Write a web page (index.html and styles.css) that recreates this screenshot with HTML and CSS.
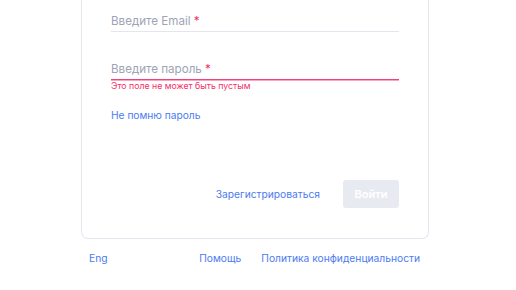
FILE: index.html
```html
<!DOCTYPE html>
<html lang="ru">
<head>
    <meta charset="UTF-8">
    <meta name="viewport" content="width=device-width, initial-scale=1.0">
    <title>Вход</title>
    <link rel="stylesheet" href="styles.css">
</head>
<body><div class="page">
    <form class="card" onsubmit="return false">
        <label class="field">
            <span class="label-text">Введите Email <span class="req">*</span></span>
            <input type="email" name="email">
        </label>
        <label class="field field-error">
            <span class="label-text">Введите пароль <span class="req">*</span></span>
            <input type="password" name="password">
        </label>
        <div class="error-line"></div>
        <p class="error-text">Это поле не может быть пустым</p>

        <a href="#" class="forgot">Не помню пароль</a>

        <div class="actions">
            <a href="#" class="register">Зарегистрироваться</a>
            <button type="submit" class="login-btn" disabled>Войти</button>
        </div>
    </form>

    <div class="footer">
        <a href="#" class="lang">Eng</a>
        <div class="footer-links">
            <a href="#">Помощь</a>
            <a href="#">Политика конфиденциальности</a>
        </div>
    </div>
</div>
</body>
</html>
```

FILE: styles.css
```css
* {
    margin: 0;
    padding: 0;
    box-sizing: border-box;
    font-family: Inter, "Noto Sans", sans-serif;
}
body {
    background: #ffffff;
}
.page {
    width: 348px;
    margin-left: 81px;
}
.card {
    display: flex;
    flex-direction: column;
    border: 1px solid #e3e6ee;
    border-top: none;
    border-radius: 0 0 7px 7px;
    padding: 0 29px 30px;
}
.field {
    display: block;
    position: relative;
    padding: 14px 0 2px;
    border-bottom: 1px solid #e3e6ee;
}
.field + .field {
    margin-top: 16px;
}
.label-text {
    display: block;
    font-size: 11.6px;
    line-height: 15px;
    color: #9ea3b5;
}
.field input {
    display: none;
}
.req {
    color: #f2306a;
}
.field-error {
    border-bottom: none;
}
.error-line {
    height: 1px;
    background: #f4407a;
    box-shadow: 0 1px 0 #f9a6c0;
}
.error-text {
    font-size: 8.75px;
    line-height: 12px;
    color: #f2306a;
}
.forgot {
    align-self: flex-start;
    margin-top: 16px;
    font-size: 10.2px;
    line-height: 14px;
    color: #4b7bf0;
    text-decoration: none;
}
.actions {
    display: flex;
    justify-content: flex-end;
    align-items: center;
    gap: 23px;
    margin-top: 58px;
}
.register {
    font-size: 10.25px;
    color: #4b7bf0;
    text-decoration: none;
}
.login-btn {
    width: 56px;
    height: 28px;
    border: none;
    border-radius: 3px;
    background: #e8eaf2;
    color: #ffffff;
    font-size: 11px;
    font-weight: 600;
}
.footer {
    display: flex;
    justify-content: space-between;
    padding: 12px 9px 0 8px;
    font-size: 10.25px;
    line-height: 14px;
}
.footer a {
    color: #4b7bf0;
    text-decoration: none;
}
.footer-links {
    display: flex;
    gap: 20px;
}
```
